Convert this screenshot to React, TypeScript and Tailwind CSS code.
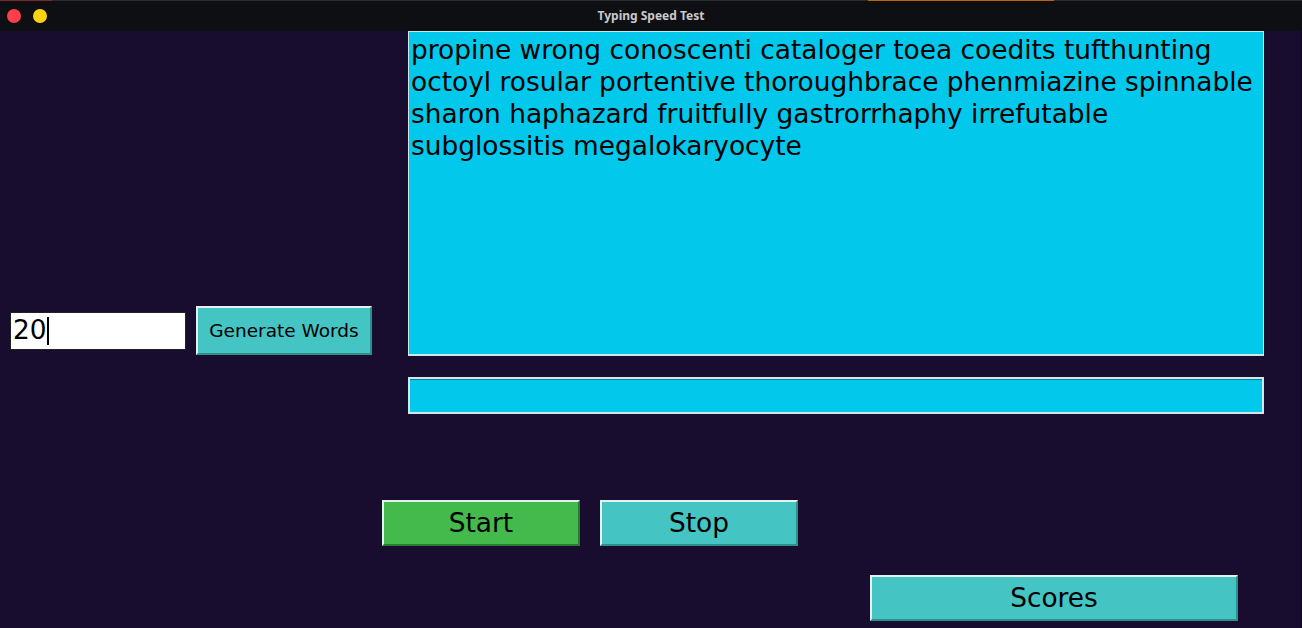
import React from 'react';

const WORDS =
  'propine wrong conoscenti cataloger toea coedits tufthunting octoyl rosular portentive thoroughbrace phenmiazine spinnable sharon haphazard fruitfully gastrorrhaphy irrefutable subglossitis megalokaryocyte';

const raised = 'border-2 border-t-[#e3f1f1] border-l-[#e3f1f1]';

export default function App() {
  return (
    <div className="w-[1302px] h-[628px] overflow-hidden flex flex-col bg-[#190d2f]" style={{ fontFamily: '"DejaVu Sans", sans-serif' }}>
      {/* window title bar */}
      <div className="h-[31px] shrink-0 bg-[#0e0f13] flex flex-col">
        <div className="h-px flex">
          <div className="w-[52px] bg-[#7a2a2a]" />
          <div className="w-[816px] bg-[#2a2b30]" />
          <div className="w-[186px] bg-[#b8640f]" />
          <div className="flex-1 bg-[#2a2b30]" />
        </div>
        <div className="flex-1 flex items-center relative">
          <div className="flex items-center gap-[12px] pl-[7px]">
            <span className="w-[14px] h-[14px] rounded-full bg-[#fe3e48]" />
            <span className="w-[14px] h-[14px] rounded-full bg-[#fdd20f]" />
          </div>
          <div className="absolute inset-0 flex items-center justify-center text-[12px] font-bold text-[#c9cacc]" style={{ fontFamily: '"Noto Sans", sans-serif' }}>
            Typing Speed Test
          </div>
        </div>
      </div>

      <div className="flex-1 flex">
        <div className="w-[1300px] flex flex-col">
          {/* top area */}
          <div className="flex">
            <div className="w-[408px] shrink-0 flex items-center pt-[275px] pl-[10px] self-start">
              <div className="w-[176px] h-[38px] bg-white border border-[#222] flex items-center text-[26.4px] text-black leading-none pl-[2px]">
                20<span className="w-[2px] h-[28px] bg-black" />
              </div>
              <button className={`ml-[10px] w-[176px] h-[49px] bg-[#45c4c4] ${raised} border-b-[#2e8f8f] border-r-[#2e8f8f] text-[18.5px] text-black`}>
                Generate Words
              </button>
            </div>
            <div className="w-[856px] flex flex-col">
              <div className="h-[325px] bg-[#02c8eb] border border-[#cfe6ea] border-b-2 pl-[2px] pr-[3px] pt-[2px] text-[26.4px] leading-[32px] text-black">
                {WORDS}
              </div>
              <div className="mt-[21px] h-[37px] bg-[#02c8eb] border-2 border-[#cfe6ea] shadow-[inset_0_1px_0_#0b7f95]" />
            </div>
          </div>

          {/* start / stop */}
          <div className="flex mt-[86px] pl-[382px] gap-[20px]">
            <button className={`w-[198px] h-[46px] bg-[#44b94c] ${raised} border-b-[#2a7a30] border-r-[#2a7a30] text-[26.4px] text-black`}>
              Start
            </button>
            <button className={`w-[198px] h-[46px] bg-[#45c4c4] ${raised} border-b-[#2e8f8f] border-r-[#2e8f8f] text-[26.4px] text-black`}>
              Stop
            </button>
          </div>

          {/* scores */}
          <div className="flex mt-[29px] pl-[870px]">
            <button className={`w-[368px] h-[46px] bg-[#45c4c4] ${raised} border-b-[#2e8f8f] border-r-[#2e8f8f] text-[26.4px] text-black`}>
              Scores
            </button>
          </div>
        </div>
        <div className="flex-1 bg-[#130b22]" />
      </div>
    </div>
  );
}
